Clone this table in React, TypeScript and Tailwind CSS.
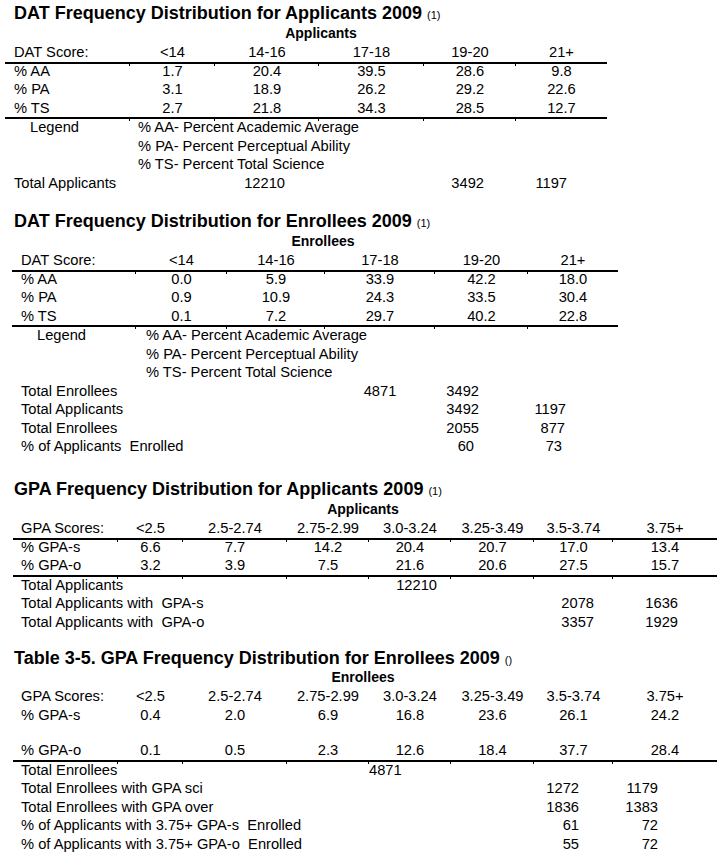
import React from 'react';

type Cell = string | { t: string; c: string };

const S1 = 'grid-cols-[125px_85px_104px_105px_92px_91px] ml-[5px]';
const S2 = 'grid-cols-[124px_91px_98px_110px_93px_90px] ml-[12px]';
const S3 = 'grid-cols-[105px_65px_104px_82px_82px_83px_79px_104px] ml-[13px]';

const Row: React.FC<{ grid: string; cells: Cell[]; pad: string; h?: string }> = ({
  grid,
  cells,
  pad,
  h = 'h-[18.5px] leading-[18.5px]',
}) => (
  <div className={`grid ${grid} ${h} text-[14.7px]`}>
    {cells.map((c, i) => {
      const text = typeof c === 'string' ? c : c.t;
      const cls = typeof c === 'string' ? (i === 0 ? `${pad} text-left` : 'text-center') : c.c;
      return (
        <div key={i} className={`whitespace-pre ${cls}`}>
          {text}
        </div>
      );
    })}
  </div>
);

// horizontal rule with small column ticks
const Rule: React.FC<{ grid: string; n: number; h?: string }> = ({ grid, n, h = 'h-0' }) => (
  <div className={`grid ${grid} ${h}`}>
    {Array.from({ length: n }).map((_, i) => (
      <div key={i} className="border-t-2 border-black h-0">
        {i < n - 1 && <div className="h-[2px] border-r border-black" />}
      </div>
    ))}
  </div>
);

const Title: React.FC<{ text: string; note: string; className?: string }> = ({ text, note, className = '' }) => (
  <div className={`h-[20px] leading-[20px] pl-[14px] text-[18px] font-bold whitespace-nowrap ${className}`}>
    {text} <span className="text-[11px] font-normal">{note}</span>
  </div>
);

export default function App() {
  return (
    <div className="w-[723px] h-[858px] overflow-hidden bg-white text-black pt-[3px] font-['Liberation_Sans',Arial,sans-serif]">
      {/* DAT applicants */}
      <section>
        <Title text="DAT Frequency Distribution for Applicants 2009" note="(1)" />
        <div className="w-[642px] h-[20px] leading-[20px] text-center text-[14px] font-bold">Applicants</div>
        <Row grid={S1} pad="pl-[9px]" cells={['DAT Score:', '<14', '14-16', '17-18', '19-20', '21+']} />
        <Rule grid={S1} n={6} />
        <Row grid={S1} pad="pl-[9px]" cells={['% AA', '1.7', '20.4', '39.5', '28.6', '9.8']} />
        <Row grid={S1} pad="pl-[9px]" cells={['% PA', '3.1', '18.9', '26.2', '29.2', '22.6']} />
        <Row grid={S1} pad="pl-[9px]" cells={['% TS', '2.7', '21.8', '34.3', '28.5', '12.7']} />
        <Rule grid={S1} n={6} h="h-[1px]" />
        <Row grid={S1} pad="pl-[9px]" cells={[{ t: 'Legend', c: 'pl-[25px]' }, { t: '% AA- Percent Academic Average', c: 'col-span-5 pl-[8px]' }]} />
        <Row grid={S1} pad="pl-[9px]" cells={['', { t: '% PA- Percent Perceptual Ability', c: 'col-span-5 pl-[8px]' }]} />
        <Row grid={S1} pad="pl-[9px]" cells={['', { t: '% TS- Percent Total Science', c: 'col-span-5 pl-[8px]' }]} />
        <Row
          grid={S1}
          pad="pl-[9px]"
          cells={[
            { t: 'Total Applicants', c: 'col-span-2 pl-[9px]' },
            { t: '12210', c: 'text-right pr-[34px]' },
            '',
            { t: '3492', c: 'text-right pr-[32px]' },
            { t: '1197', c: 'text-right pr-[40px]' },
          ]}
        />
      </section>

      {/* DAT enrollees */}
      <section className="mt-[19px]">
        <Title text="DAT Frequency Distribution for Enrollees 2009" note="(1)" />
        <div className="w-[646px] h-[20px] leading-[20px] text-center text-[14px] font-bold">Enrollees</div>
        <Row grid={S2} pad="pl-[9px]" cells={['DAT Score:', '<14', '14-16', '17-18', '19-20', '21+']} />
        <Rule grid={S2} n={6} />
        <Row grid={S2} pad="pl-[9px]" cells={['% AA', '0.0', '5.9', '33.9', '42.2', '18.0']} />
        <Row grid={S2} pad="pl-[9px]" cells={['% PA', '0.9', '10.9', '24.3', '33.5', '30.4']} />
        <Row grid={S2} pad="pl-[9px]" cells={['% TS', '0.1', '7.2', '29.7', '40.2', '22.8']} />
        <Rule grid={S2} n={6} h="h-[1px]" />
        <Row grid={S2} pad="pl-[9px]" cells={[{ t: 'Legend', c: 'pl-[25px]' }, { t: '% AA- Percent Academic Average', c: 'col-span-5 pl-[10px]' }]} />
        <Row grid={S2} pad="pl-[9px]" cells={['', { t: '% PA- Percent Perceptual Ability', c: 'col-span-5 pl-[10px]' }]} />
        <Row grid={S2} pad="pl-[9px]" cells={['', { t: '% TS- Percent Total Science', c: 'col-span-5 pl-[10px]' }]} />
        <Row
          grid={S2}
          pad="pl-[9px]"
          cells={[
            { t: 'Total Enrollees', c: 'col-span-3 pl-[9px]' },
            '4871',
            { t: '3492', c: 'text-right pr-[49px]' },
          ]}
        />
        <Row
          grid={S2}
          pad="pl-[9px]"
          cells={[
            { t: 'Total Applicants', c: 'col-span-4 pl-[9px]' },
            { t: '3492', c: 'text-right pr-[49px]' },
            { t: '1197', c: 'text-right pr-[52px]' },
          ]}
        />
        <Row
          grid={S2}
          pad="pl-[9px]"
          cells={[
            { t: 'Total Enrollees', c: 'col-span-4 pl-[9px]' },
            { t: '2055', c: 'text-right pr-[49px]' },
            { t: '877', c: 'text-right pr-[53px]' },
          ]}
        />
        <Row
          grid={S2}
          pad="pl-[9px]"
          cells={[
            { t: '% of Applicants  Enrolled', c: 'col-span-4 pl-[9px]' },
            { t: '60', c: 'text-right pr-[54px]' },
            { t: '73', c: 'text-right pr-[56px]' },
          ]}
        />
      </section>

      {/* GPA applicants */}
      <section className="mt-[23.5px]">
        <Title text="GPA Frequency Distribution for Applicants 2009" note="(1)" />
        <div className="w-[726px] h-[20px] leading-[20px] text-center text-[14px] font-bold">Applicants</div>
        <Row grid={S3} pad="pl-[8px]" cells={['GPA Scores:', '<2.5', '2.5-2.74', '2.75-2.99', '3.0-3.24', '3.25-3.49', '3.5-3.74', '3.75+']} />
        <Rule grid={S3} n={8} />
        <Row grid={S3} pad="pl-[8px]" cells={['% GPA-s', '6.6', '7.7', '14.2', '20.4', '20.7', '17.0', '13.4']} />
        <Row grid={S3} pad="pl-[8px]" cells={['% GPA-o', '3.2', '3.9', '7.5', '21.6', '20.6', '27.5', '15.7']} />
        <Rule grid={S3} n={8} h="h-[1px]" />
        <Row
          grid={S3}
          pad="pl-[8px]"
          cells={[{ t: 'Total Applicants', c: 'col-span-4 pl-[8px]' }, { t: '12210', c: 'text-right pr-[14px]' }]}
        />
        <Row
          grid={S3}
          pad="pl-[8px]"
          cells={[
            { t: 'Total Applicants with  GPA-s', c: 'col-span-6 pl-[8px]' },
            { t: '2078', c: 'text-right pr-[19px]' },
            { t: '1636', c: 'text-right pr-[39px]' },
          ]}
        />
        <Row
          grid={S3}
          pad="pl-[8px]"
          cells={[
            { t: 'Total Applicants with  GPA-o', c: 'col-span-6 pl-[8px]' },
            { t: '3357', c: 'text-right pr-[19px]' },
            { t: '1929', c: 'text-right pr-[39px]' },
          ]}
        />
      </section>

      {/* GPA enrollees */}
      <section className="mt-[17px]">
        <Title text="Table 3-5. GPA Frequency Distribution for Enrollees 2009" note="()" />
        <div className="w-[726px] h-[19px] leading-[19px] text-center text-[14px] font-bold">Enrollees</div>
        <Row grid={S3} pad="pl-[8px]" cells={['GPA Scores:', '<2.5', '2.5-2.74', '2.75-2.99', '3.0-3.24', '3.25-3.49', '3.5-3.74', '3.75+']} />
        <Row grid={S3} pad="pl-[8px]" cells={['% GPA-s', '0.4', '2.0', '6.9', '16.8', '23.6', '26.1', '24.2']} />
        <div className="h-[17px]" />
        <Row grid={S3} pad="pl-[8px]" cells={['% GPA-o', '0.1', '0.5', '2.3', '12.6', '18.4', '37.7', '28.4']} />
        <Rule grid={S3} n={8} h="h-[1px]" />
        <Row
          grid={S3}
          pad="pl-[8px]"
          cells={[{ t: 'Total Enrollees', c: 'col-span-4 pl-[8px]' }, { t: '4871', c: 'text-right pr-[56px]' }]}
        />
        <Row
          grid={S3}
          pad="pl-[8px]"
          cells={[
            { t: 'Total Enrollees with GPA sci', c: 'col-span-6 pl-[8px]' },
            { t: '1272', c: 'text-right pr-[34px]' },
            { t: '1179', c: 'text-right pr-[59px]' },
          ]}
        />
        <Row
          grid={S3}
          pad="pl-[8px]"
          cells={[
            { t: 'Total Enrollees with GPA over', c: 'col-span-6 pl-[8px]' },
            { t: '1836', c: 'text-right pr-[34px]' },
            { t: '1383', c: 'text-right pr-[59px]' },
          ]}
        />
        <Row
          grid={S3}
          pad="pl-[8px]"
          cells={[
            { t: '% of Applicants with 3.75+ GPA-s  Enrolled', c: 'col-span-6 pl-[8px]' },
            { t: '61', c: 'text-right pr-[34px]' },
            { t: '72', c: 'text-right pr-[59px]' },
          ]}
        />
        <Row
          grid={S3}
          pad="pl-[8px]"
          cells={[
            { t: '% of Applicants with 3.75+ GPA-o  Enrolled', c: 'col-span-6 pl-[8px]' },
            { t: '55', c: 'text-right pr-[34px]' },
            { t: '72', c: 'text-right pr-[59px]' },
          ]}
        />
      </section>
    </div>
  );
}
